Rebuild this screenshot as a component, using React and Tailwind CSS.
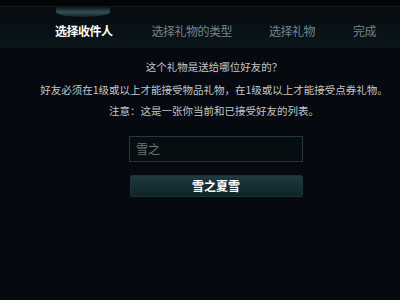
import React from 'react'

const tabs = [
  { label: '选择收件人', active: true },
  { label: '选择礼物的类型' },
  { label: '选择礼物' },
  { label: '完成' },
]

const App = () => {
  return (
    <div
      className="w-[400px] h-[300px] overflow-hidden bg-[#060a10] text-[10.5px]"
      style={{ fontFamily: '"Noto Sans CJK SC", "Noto Sans", sans-serif' }}
    >
      <div className="h-[7px] bg-[#020406] border-b border-[#121a1f]"></div>
      <div className="h-[41px] bg-gradient-to-b from-[#060b0f] to-[#0b171b] flex items-end pb-[11px] pl-[55px]">
        <div className="flex items-center">
          {tabs.map((t, i) => (
            <div key={i} className={`relative ${i === 0 ? 'mr-[39px]' : i === 1 ? 'mr-[37px]' : i === 2 ? 'mr-[38px]' : ''}`}>
              {t.active && (
                <div className="absolute left-[1px] top-[-18px] w-[54px] h-[10px] rounded-b-[50%] bg-gradient-to-b from-[#0c181c] via-[#3a575f] to-[#15262b] opacity-90"></div>
              )}
              <span
                className={`block leading-none tracking-[-0.5px] text-[12px] ${t.active ? 'text-white font-bold' : 'text-[#75838a]'}`}
              >
                {t.label}
              </span>
            </div>
          ))}
        </div>
      </div>

      <div className="flex flex-col items-center text-[#c4c6c8] pt-[14px] pl-[28px]">
        <p className="leading-none">这个礼物是送给哪位好友的？</p>
        <p className="leading-none mt-[12px]">好友必须在1级或以上才能接受物品礼物，在1级或以上才能接受点券礼物。</p>
        <p className="leading-none mt-[11px]">注意：这是一张你当前和已接受好友的列表。</p>

        <div className="mt-[19px] ml-[4px] w-[174px] h-[26px] border border-[#26383b] bg-[#070e11] flex items-center px-[6px] text-[#6a7a7c] text-[12px]">
          雪之
        </div>
        <button className="mt-[13px] ml-[4px] w-[173px] h-[22px] rounded-[2px] bg-gradient-to-b from-[#1e3a40] to-[#0f2428] border border-[#1c3236] text-white font-bold text-[12px] leading-none">
          雪之夏雪
        </button>
      </div>
    </div>
  )
}

export default App
